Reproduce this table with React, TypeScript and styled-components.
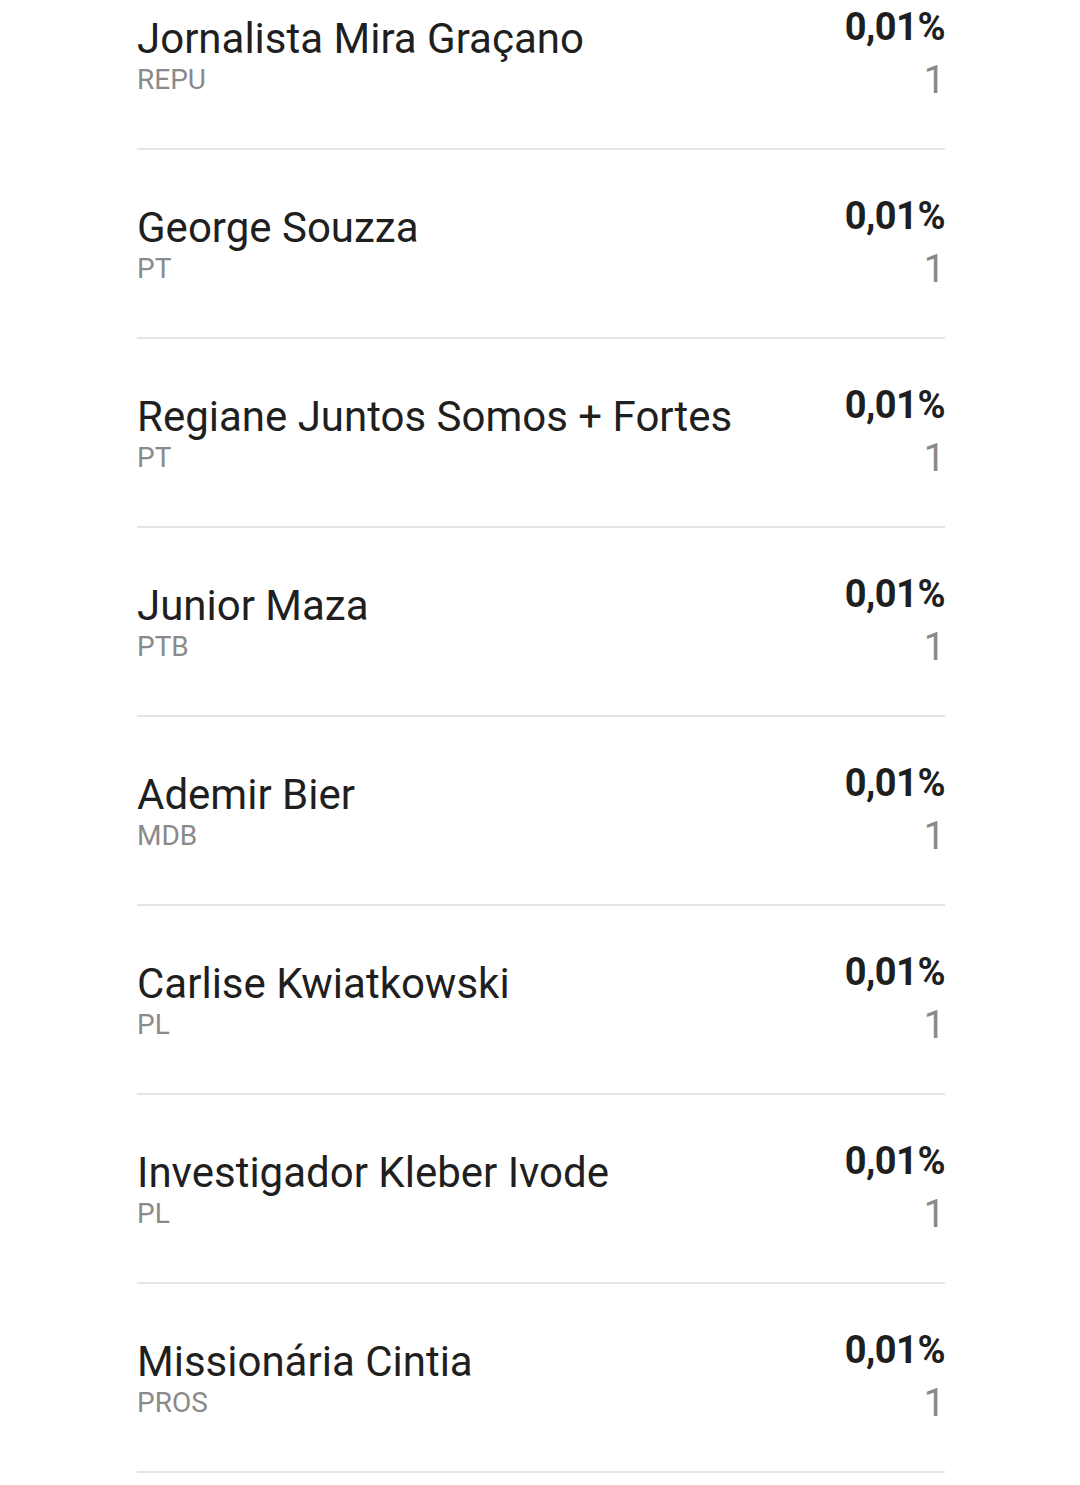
import React from 'react'
import styled, { createGlobalStyle } from 'styled-components'

const GlobalStyle = createGlobalStyle`
  html, body {
    margin: 0;
    padding: 0;
    background: #ffffff;
  }
  body {
    font-family: Roboto, "Liberation Sans", sans-serif;
    color: #1f1f1f;
  }
`

const Page = styled.div`
  width: 1080px;
  height: 1485px;
  overflow: hidden;
  background: #ffffff;
`

// the list is scrolled: first row is partly above the viewport
const List = styled.ul`
  list-style: none;
  margin: -39px 0 0 0;
  padding: 0 135px 0 137px;
`

const Row = styled.li`
  display: flex;
  justify-content: space-between;
  align-items: flex-start;
  height: 187px;
  border-bottom: 2px solid #e4e4e4;
  box-sizing: content-box;
`

const Candidate = styled.div`
  display: flex;
  flex-direction: column;
  padding-top: 54px;
`

const Name = styled.span`
  font-size: 42px;
  line-height: 48px;
  color: #1f1f1f;
`

const Party = styled.span`
  font-size: 28px;
  line-height: 34px;
  color: #8a8a8a;
`

const Result = styled.div`
  display: flex;
  flex-direction: column;
  align-items: flex-end;
  padding-top: 44px;
`

const Percent = styled.span`
  font-size: 38px;
  line-height: 44px;
  font-weight: 700;
  color: #1f1f1f;
  letter-spacing: -0.5px;
`

const Votes = styled.span`
  margin-top: 8px;
  font-size: 38px;
  line-height: 46px;
  color: #8a8a8a;
`

const candidates = [
  { name: 'Jornalista Mira Graçano', party: 'REPU' },
  { name: 'George Souzza', party: 'PT' },
  { name: 'Regiane Juntos Somos + Fortes', party: 'PT' },
  { name: 'Junior Maza', party: 'PTB' },
  { name: 'Ademir Bier', party: 'MDB' },
  { name: 'Carlise Kwiatkowski', party: 'PL' },
  { name: 'Investigador Kleber Ivode', party: 'PL' },
  { name: 'Missionária Cintia', party: 'PROS' },
]

export default function App() {
  return (
    <Page>
      <GlobalStyle />
      <List>
        {candidates.map((c) => (
          <Row key={c.name}>
            <Candidate>
              <Name>{c.name}</Name>
              <Party>{c.party}</Party>
            </Candidate>
            <Result>
              <Percent>0,01%</Percent>
              <Votes>1</Votes>
            </Result>
          </Row>
        ))}
      </List>
    </Page>
  )
}
